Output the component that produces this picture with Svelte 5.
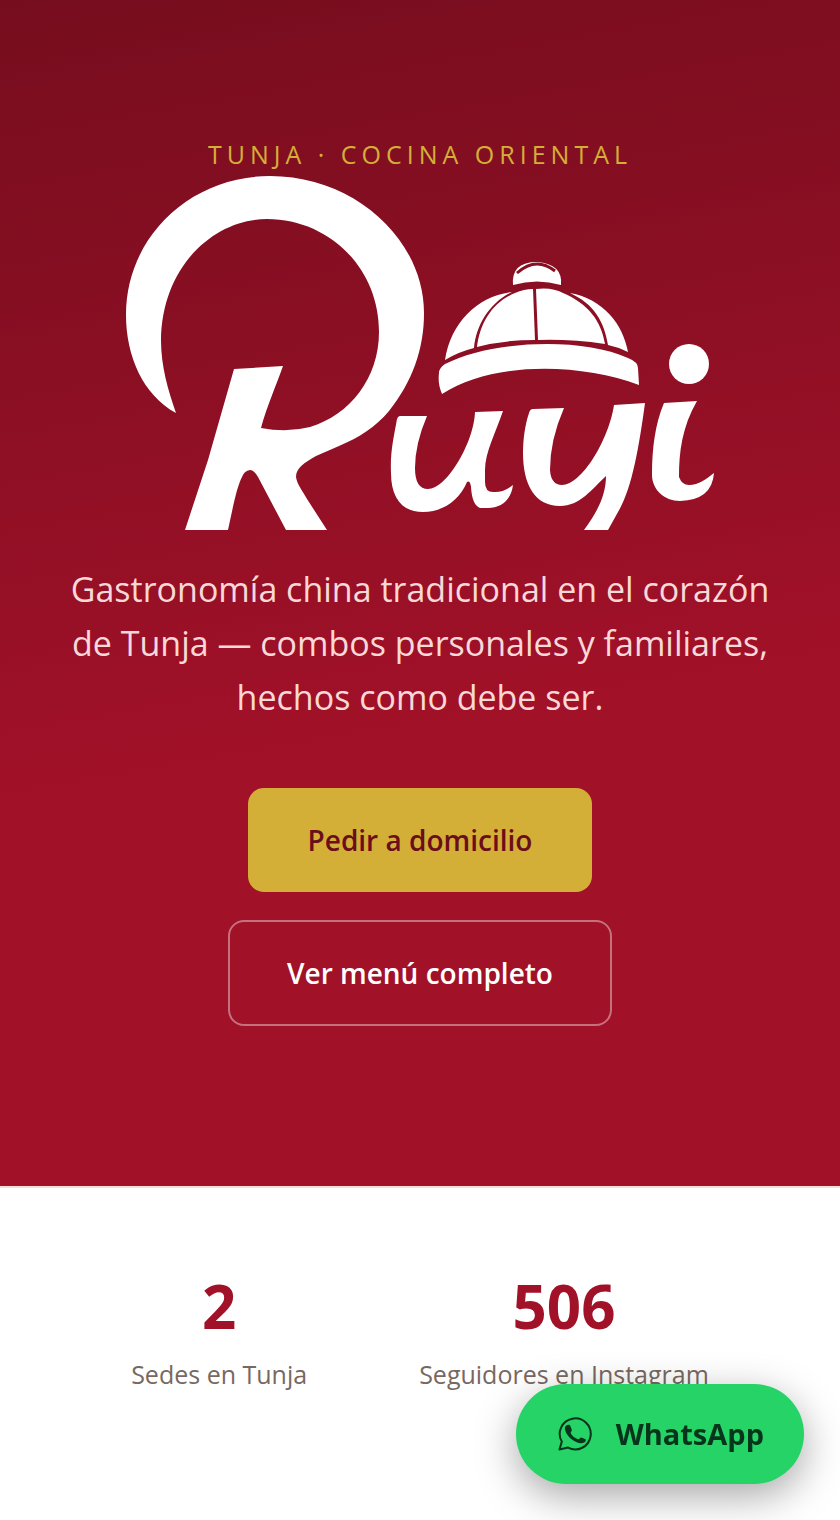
<script>
  const stats = [
    { value: '2', label: 'Sedes en Tunja' },
    { value: '506', label: 'Seguidores en Instagram' }
  ];
</script>

<main>
  <section class="hero">
    <p class="eyebrow">Tunja · Cocina Oriental</p>
    <h1>
      <svg class="logo" viewBox="126 176 589 354" role="img" aria-label="Ruyi">
        <g fill="#fff">
          <path d="M176 413C143 395 126 356 126 315C126 237 190 176 270 176C355 176 424 240 424 313C424 350 412 382 389 411C376 427 358 438 339 446L316 456C304 463 296 468 296 477C297 484 302 490 307 499L327 530H286L258 477Q254 470 250 470Q244 471 242 477C237 487 234 502 228 530H185L208 460L234 369L283 366C276 386 267 406 261 428Q287 433 310 427C350 415 379 378 379 332C379 267 328 219 267 219C214 219 162 266 161 340C161 366 168 390 176 413Z" />
          <path d="M513 285Q511 262 537 262Q563 264 561 285Q537 278 513 285Z" />
          <path d="M445 360C451 322 478 296 512 292C490 302 476 325 474 348Q458 352 445 360Z" />
          <path d="M477 347C480 322 493 302 515 293Q524 289 533 289L535 340Q503 340 477 347Z" />
          <path d="M536 289Q552 287 563 293C588 304 601 320 605 344Q571 339 538 340Z" />
          <path d="M570 293C603 299 623 324 628 352Q618 347 608 345C604 321 594 304 570 293Z" />
          <path d="M442 394C439 387 438 380 439 373Q439 368 445 364C492 340 582 337 628 358Q638 362 638 368L639 385C580 363 493 361 442 394Z" />
          <circle cx="689" cy="364" r="20" />
          <path d="M400 416H427Q415 444 415 468Q415 489 428 489C447 489 474 442 475 412L503 411C496 432 485 452 485 470V482Q485 492 493 492Q503 493 513 485C511 501 500 508 488 508H480Q472 505 471 487Q470 480 467 482C460 499 444 512 423 512C403 512 391 499 391 473C390 452 394 436 397 419Q398 416 400 416Z" />
          <path d="M533 409L564 408Q550 440 550 470Q551 485 562 485C582 485 609 439 614 405L645 403C639 447 632 489 618 512L608 530H584C597 512 606 496 606 476C592 489 580 506 560 506C535 506 523 485 523 453C523 439 525 425 529 413Q530 409 533 409Z" />
          <path d="M664 403L697 401C682 427 679 452 679 477Q682 485 689 485C699 485 706 479 714 473Q712 500 680 501C664 501 652 489 652 475C652 449 655 424 664 403Z" />
        </g>
        <path d="M517 273Q536 256 555 271" fill="none" stroke="#860f21" stroke-width="3" />
      </svg>
    </h1>
    <p class="lead">
      Gastronomía china tradicional en el corazón de Tunja — combos personales y familiares, hechos
      como debe ser.
    </p>
    <div class="actions">
      <a class="button primary" href="#domicilio">Pedir a domicilio</a>
      <a class="button outline" href="#menu">Ver menú completo</a>
    </div>
  </section>

  <section class="stats">
    {#each stats as stat}
      <div class="stat">
        <strong>{stat.value}</strong>
        <span>{stat.label}</span>
      </div>
    {/each}
  </section>
</main>

<a class="whatsapp" href="#whatsapp">
  <svg viewBox="0 0 34 34" aria-hidden="true">
    <path d="M1.5 32.5L3.8 24.6A15.5 15.5 0 1 1 10 30.6Z" fill="none" stroke="currentColor" stroke-width="2" stroke-linejoin="round" />
    <path d="M8.4 8.6C9.6 7.5 11.9 7.4 12.4 9L13.8 12.8C14.1 14.1 12.4 15.2 12.7 16.2C14.2 18.9 17 21.3 20 22.3C21.2 22.5 22.3 20.2 23.4 20.4L27.5 22.2C28.4 23 27.3 24.9 26.1 25.6C22.6 27.5 17.4 25.3 13.6 22.3C10.2 19.4 7.2 15.2 6.9 11.7C6.9 10.3 7.5 9.3 8.4 8.6Z" fill="currentColor" />
  </svg>
  WhatsApp
</a>

<style>
  :global(body) {
    margin: 0;
    background: #fff;
    font-family: 'Open Sans', 'Noto Sans', sans-serif;
  }
  .hero {
    display: flex;
    flex-direction: column;
    align-items: center;
    padding: 136px 48px 160px;
    background: linear-gradient(170deg, #760d1e 0%, #a11128 60%);
    text-align: center;
  }
  p,
  h1 {
    margin: 0;
  }
  .eyebrow {
    margin-bottom: 4px;
    color: #d4af37;
    font-size: 25px;
    line-height: 36px;
    letter-spacing: 5px;
    text-transform: uppercase;
  }
  h1 {
    display: flex;
    width: 100%;
    justify-content: center;
  }
  .logo {
    width: 80%;
    max-width: 589px;
    height: auto;
  }
  .lead {
    max-width: 720px;
    margin-top: 32px;
    color: #f8d8d8;
    font-size: 34px;
    line-height: 54px;
  }
  .actions {
    display: flex;
    flex-direction: column;
    align-items: center;
    gap: 28px;
    margin-top: 64px;
  }
  .button {
    border-radius: 16px;
    font-size: 28px;
    font-weight: 600;
    line-height: 38px;
    text-decoration: none;
  }
  .primary {
    padding: 33px 60px;
    background: #d4af37;
    color: #6b0d1a;
  }
  .outline {
    padding: 32px 57px;
    border: 2px solid rgb(255 255 255 / 40%);
    color: #fff;
  }
  .stats {
    display: flex;
    flex-wrap: wrap;
    justify-content: center;
    gap: 48px 112px;
    padding: 80px 48px 128px;
    border-top: 2px solid #f8e0d0;
  }
  .stat {
    display: flex;
    flex-direction: column;
    align-items: center;
  }
  .stat strong {
    color: #a11128;
    font-size: 60px;
    line-height: 76px;
  }
  .stat span {
    margin-top: 10px;
    color: #786860;
    font-size: 25px;
    line-height: 40px;
  }
  .whatsapp {
    position: fixed;
    right: 36px;
    bottom: 36px;
    display: flex;
    align-items: center;
    gap: 24px;
    padding: 30px 40px 30px 42px;
    border-radius: 50px;
    background: #25d366;
    box-shadow: 0 12px 40px rgb(0 0 0 / 35%);
    color: #06351b;
    font-size: 29px;
    font-weight: 700;
    line-height: 40px;
    text-decoration: none;
  }
  .whatsapp svg {
    width: 34px;
    height: 34px;
  }
</style>
